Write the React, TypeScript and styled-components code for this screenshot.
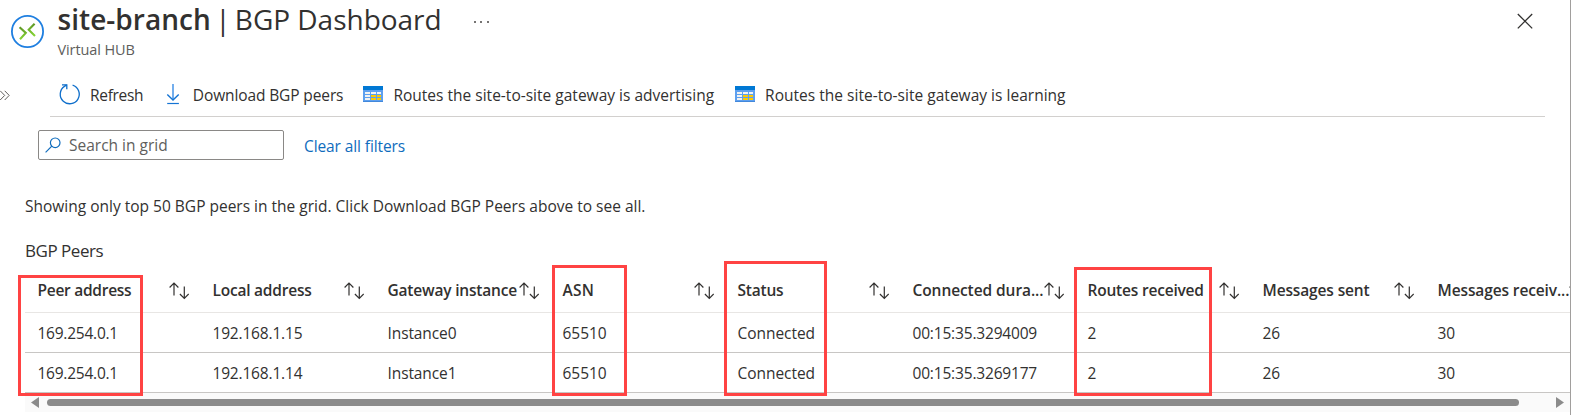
import React from 'react';
import styled, { createGlobalStyle } from 'styled-components';

const GlobalStyle = createGlobalStyle`
  body {
    margin: 0;
    background: #fff;
    color: #323130;
    font-family: 'Open Sans', 'Noto Sans', sans-serif;
    font-size: 15.5px;
    overflow: hidden;
  }
  svg { display: block; flex: none; }
`;

const Blade = styled.main`
  position: relative;
  box-sizing: border-box;
  height: 415px;
  border-right: 1px solid #a19f9d;
  overflow: hidden;
`;

const Header = styled.header`
  display: flex;
  height: 76px;
  padding-left: 11px;
`;

const HubIconBox = styled.div`
  padding: 15px 13.5px 0 0;
`;

const Titles = styled.div`
  flex: 1;
`;

const TitleRow = styled.h1`
  display: flex;
  margin: 0;
  font-size: 28px;
  font-weight: 400;
  line-height: 38px;
  white-space: pre;
`;

const ResourceName = styled.span`
  font-weight: 600;
  letter-spacing: 0.04px;
`;

const Divider = styled.span`
  display: flex;
  justify-content: center;
  width: 24px;
`;

const PageName = styled.span`
  letter-spacing: -0.02px;
`;

const MoreButton = styled.span`
  display: flex;
  align-items: center;
  gap: 4.2px;
  margin: 5px 0 0 32.5px;
`;

const Dot = styled.i`
  width: 2px;
  height: 2px;
  border-radius: 1px;
  background: #484644;
`;

const Subtitle = styled.div`
  margin-top: 1px;
  color: #605e5c;
  font-size: 14.5px;
  line-height: 21px;
  letter-spacing: -0.1px;
`;

const CloseButton = styled.div`
  padding: 13px 37px 0 0;
`;

const ToolbarRow = styled.div`
  display: flex;
  height: 41px;
`;

const Expander = styled.div`
  width: 50px;
  padding-top: 14px;
  box-sizing: border-box;
`;

const Toolbar = styled.nav`
  display: flex;
  box-sizing: border-box;
  width: 1495px;
  padding: 0 0 2px 9px;
  border-bottom: 1px solid #d2d0ce;
`;

const Command = styled.div<{ $gap: number; $after: number; $track?: number }>`
  display: flex;
  align-items: center;
  gap: ${(p) => p.$gap}px;
  margin-right: ${(p) => p.$after}px;
  letter-spacing: ${(p) => p.$track ?? 0}px;
  line-height: 22px;
  white-space: nowrap;
`;

const FilterRow = styled.div`
  display: flex;
  margin: 13px 0 0 38px;
  height: 30px;
`;

const SearchBox = styled.div`
  display: flex;
  align-items: center;
  gap: 8px;
  box-sizing: border-box;
  width: 246px;
  padding-left: 6px;
  border: 1px solid #8a8886;
  border-radius: 2px;
  color: #605e5c;
  line-height: 22px;
`;

const ClearLink = styled.a`
  margin-left: 20px;
  color: #0f6cbd;
  line-height: 32px;
  letter-spacing: -0.1px;
`;

const Notice = styled.p`
  margin: 30px 0 0 25px;
  line-height: 32px;
`;

const GridTitle = styled.h2`
  margin: 16px 0 0 25px;
  font-size: 17px;
  font-weight: 400;
  line-height: 25px;
  letter-spacing: -0.47px;
`;

const Grid = styled.section`
  margin: 4px 0 0 25px;
  overflow: hidden;
`;

const HeadRow = styled.div`
  display: flex;
  width: 1575px;
  height: 45px;
  border-bottom: 1px solid #e8e6e4;
`;

const HeadCell = styled.div`
  display: flex;
  flex: none;
  justify-content: space-between;
  box-sizing: border-box;
  width: 175px;
  padding: 0 11px 0 12.5px;
  font-weight: 600;
  line-height: 46px;
`;

const HeadLabel = styled.span<{ $track: number }>`
  width: 0;
  letter-spacing: ${(p) => p.$track}px;
  white-space: nowrap;
`;

const SortBox = styled.span`
  padding-top: 15px;
`;

const Row = styled.div`
  display: flex;
  width: 1575px;
  height: 39px;
  border-bottom: 1px solid #c8c6c4;
`;

const Cell = styled.div<{ $track: number }>`
  flex: none;
  box-sizing: border-box;
  width: 175px;
  padding-left: 12.5px;
  line-height: 40px;
  letter-spacing: ${(p) => p.$track}px;
`;

const ScrollBar = styled.div`
  display: flex;
  align-items: center;
  height: 19px;
  padding: 0 6px;
  background: #fafafa;
`;

const Thumb = styled.div`
  width: 1472px;
  height: 7px;
  margin: 0 auto 0 8px;
  border-radius: 4px;
  background: #8b8b8b;
`;

const Highlight = styled.div<{ $x: number; $y: number; $w: number }>`
  position: absolute;
  box-sizing: border-box;
  left: ${(p) => p.$x}px;
  top: ${(p) => p.$y}px;
  width: ${(p) => p.$w}px;
  height: ${(p) => 396 - p.$y}px;
  border: 3px solid #ff4343;
`;

const HubIcon = () => (
  <svg width="33" height="33" viewBox="0 0 33 33" fill="none">
    <defs>
      <linearGradient id="hub" x1="0" y1="0" x2="0" y2="1">
        <stop offset="0" stopColor="#5e9624" />
        <stop offset="1" stopColor="#86d633" />
      </linearGradient>
    </defs>
    <circle cx="16.5" cy="16.5" r="15.6" stroke="#1f7fe0" strokeWidth="1.8" />
    <path d="M8.6 12.2 14.8 17.9 9 24.3" stroke="url(#hub)" strokeWidth="2.1" />
    <path d="M23.6 8.8 17.7 14.8 24 20.9" stroke="url(#hub)" strokeWidth="2.1" />
  </svg>
);

const RefreshIcon = () => (
  <svg width="22" height="22" viewBox="0 0 22 22" fill="none" stroke="#0f6fcb" strokeWidth="1.3">
    <path d="M13.6 1.2A9.5 9.5 0 1 1 5.4 2.4L7.6 .9" />
    <path d="M3 .8H7.8V5.2" />
  </svg>
);

const DownloadIcon = () => (
  <svg width="14" height="22" viewBox="-.5 0 14 22" fill="none" stroke="#1474d4">
    <path d="M6.5 0V16" stroke="#5ba0ea" strokeWidth="1.7" />
    <path d="M.8 10.4 6.5 16 12.2 10.4" strokeWidth="1.4" />
    <path d="M.7 19.5H12.4" strokeWidth="1.2" />
  </svg>
);

const TableIcon = () => (
  <svg width="20" height="18" viewBox="0 0 20 18">
    <rect width="20" height="16" rx=".6" fill="#5ea0ef" />
    <path d="M0 0H20V4H0Z" fill="#0078d4" />
    <path d="M0 15.2H20V16H0Z" fill="#3b82d6" />
    <path d="M2 6h5v2H2zM8 6h5v2H8zM14 6h4v2h-4zM2 9h5v2H2zM2 12h5v2H2z" fill="#f2f2f2" />
    <path d="M8 9h5v2H8zM14 9h4v2h-4zM8 12h5v2H8zM14 12h4v2h-4z" fill="#ffca00" />
  </svg>
);

const SearchIcon = () => (
  <svg width="16" height="16" viewBox="0 0 16 16" fill="none" stroke="#0f6cbd" strokeWidth="1.2">
    <circle cx="10.2" cy="5.8" r="4.8" />
    <path d="M6.8 9.2.6 15.4" />
  </svg>
);

const SortIcon = () => (
  <svg width="20" height="19" viewBox="0 0 20 19" fill="none" stroke="#323130" strokeWidth="1.2">
    <path d="M5 13.5V1.3M.6 5.5 5 1.1 9.4 5.5" />
    <path d="M15.3 4.4V16.2M10.9 12 15.3 16.4 19.7 12" />
  </svg>
);

const columns: { label: string; track: number; cellTrack: number; values: string[] }[] = [
  { label: 'Peer address', track: -0.27, cellTrack: -0.24, values: ['169.254.0.1', '169.254.0.1'] },
  { label: 'Local address', track: -0.22, cellTrack: -0.18, values: ['192.168.1.15', '192.168.1.14'] },
  { label: 'Gateway instance', track: -0.19, cellTrack: -0.1, values: ['Instance0', 'Instance1'] },
  { label: 'ASN', track: 0.3, cellTrack: -0.05, values: ['65510', '65510'] },
  { label: 'Status', track: -0.22, cellTrack: -0.05, values: ['Connected', 'Connected'] },
  { label: 'Connected dura...', track: -0.08, cellTrack: -0.18, values: ['00:15:35.3294009', '00:15:35.3269177'] },
  { label: 'Routes received', track: -0.2, cellTrack: 0, values: ['2', '2'] },
  { label: 'Messages sent', track: -0.14, cellTrack: 0, values: ['26', '26'] },
  { label: 'Messages receiv...', track: -0.12, cellTrack: 0, values: ['30', '30'] },
];

export default function App() {
  return (
    <Blade>
      <GlobalStyle />
      <Header>
        <HubIconBox><HubIcon /></HubIconBox>
        <Titles>
          <TitleRow>
            <ResourceName>site-branch</ResourceName>
            <Divider>|</Divider>
            <PageName>BGP Dashboard</PageName>
            <MoreButton><Dot /><Dot /><Dot /></MoreButton>
          </TitleRow>
          <Subtitle>Virtual HUB</Subtitle>
        </Titles>
        <CloseButton>
          <svg width="16" height="16" viewBox="0 0 16 16" fill="none" stroke="#323130" strokeWidth="1.3">
            <path d="M.8 1 15.2 15.4M15.2 1 .8 15.4" />
          </svg>
        </CloseButton>
      </Header>

      <ToolbarRow>
        <Expander>
          <svg width="10" height="11" viewBox="0 0 10 11" fill="none" stroke="#605e5c" strokeWidth="1">
            <path d="M.2 .8 4.7 5.4 .2 10M4.7 .8 9.2 5.4 4.7 10" />
          </svg>
        </Expander>
        <Toolbar>
          <Command $gap={9} $after={22.5} $track={-0.3}><RefreshIcon />Refresh</Command>
          <Command $gap={13} $after={20} $track={-0.12}><DownloadIcon />Download BGP peers</Command>
          <Command $gap={10} $after={20.5} $track={0.01}><TableIcon />Routes the site-to-site gateway is advertising</Command>
          <Command $gap={10.5} $after={0} $track={0.02}><TableIcon />Routes the site-to-site gateway is learning</Command>
        </Toolbar>
      </ToolbarRow>

      <FilterRow>
        <SearchBox><SearchIcon />Search in grid</SearchBox>
        <ClearLink>Clear all filters</ClearLink>
      </FilterRow>

      <Notice>Showing only top 50 BGP peers in the grid. Click Download BGP Peers above to see all.</Notice>
      <GridTitle>BGP Peers</GridTitle>

      <Grid>
        <HeadRow>
          {columns.map((c) => (
            <HeadCell key={c.label}>
              <HeadLabel $track={c.track}>{c.label}</HeadLabel>
              <SortBox><SortIcon /></SortBox>
            </HeadCell>
          ))}
        </HeadRow>
        {[0, 1].map((row) => (
          <Row key={row}>
            {columns.map((c) => (
              <Cell key={c.label} $track={c.cellTrack}>{c.values[row]}</Cell>
            ))}
          </Row>
        ))}
        <ScrollBar>
          <svg width="8" height="11" viewBox="0 0 8 11"><path d="M8 0V11L0 5.5Z" fill="#8b8b8b" /></svg>
          <Thumb />
          <svg width="8" height="11" viewBox="0 0 8 11"><path d="M0 0V11L8 5.5Z" fill="#8b8b8b" /></svg>
        </ScrollBar>
      </Grid>

      <Highlight $x={18} $y={275} $w={125} />
      <Highlight $x={552} $y={265} $w={75} />
      <Highlight $x={724} $y={261} $w={103} />
      <Highlight $x={1074} $y={267} $w={138} />
    </Blade>
  );
}
